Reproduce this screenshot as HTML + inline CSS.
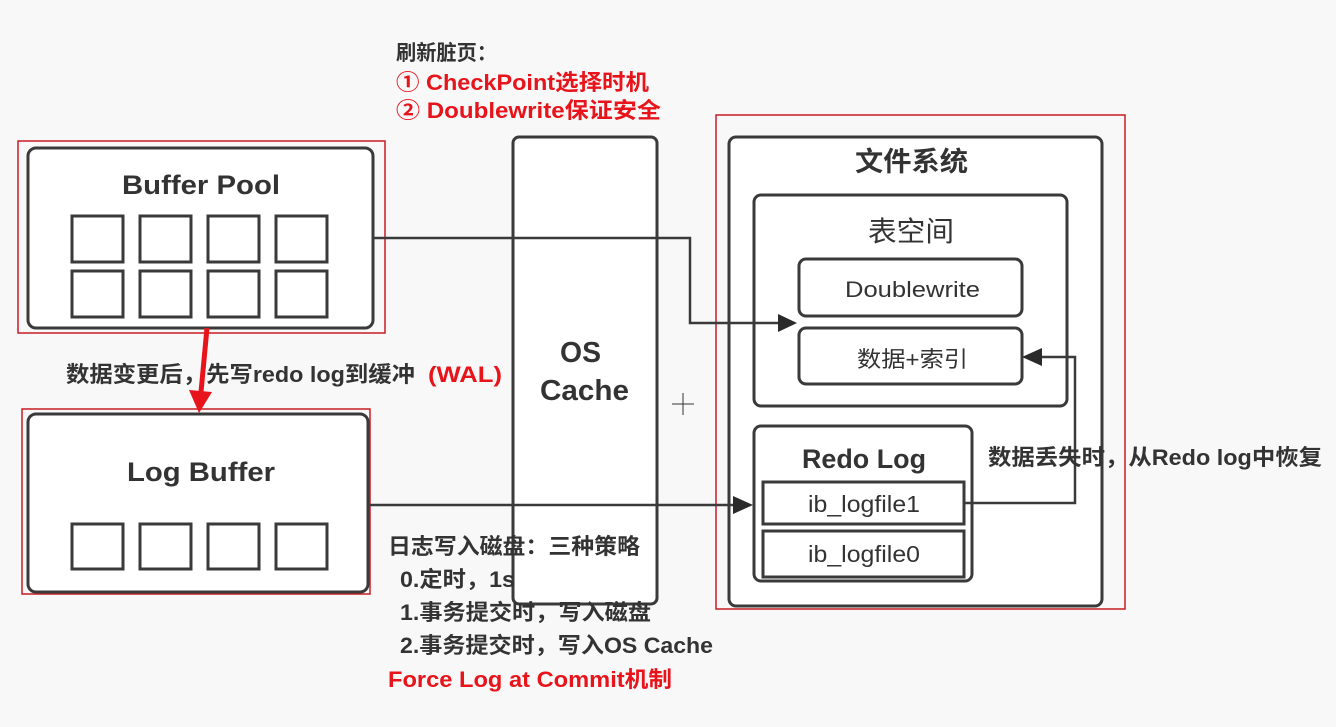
<!DOCTYPE html>
<html><head><meta charset="utf-8"><style>
html,body{margin:0;padding:0;background:#f8f8f8;}
svg{display:block}
text{font-family:"Liberation Sans","Noto Sans CJK SC",sans-serif;font-weight:bold;fill:#333}
.r{fill:#e8141b}
.n{font-weight:normal}
</style></head><body>
<svg width="1336" height="727" viewBox="0 0 1336 727" xmlns="http://www.w3.org/2000/svg">
<rect width="1336" height="727" fill="#f8f8f8"/>
<g fill="none" stroke="#c81c24" stroke-width="1.5">
<rect x="18" y="141" width="367" height="192"/>
<rect x="22" y="409" width="348" height="185"/>
<rect x="716" y="115" width="409" height="494"/>
</g>
<g fill="#fff" stroke="#3a3a3a" stroke-width="3">
<rect x="28" y="148" width="345" height="180" rx="8"/>
<rect x="28" y="414" width="340" height="178" rx="8"/>
<rect x="513" y="137" width="144" height="467" rx="6"/>
<rect x="729" y="137" width="373" height="469" rx="7"/>
<rect x="754" y="195" width="313" height="211" rx="7"/>
<rect x="799" y="259" width="223" height="57" rx="7"/>
<rect x="799" y="328" width="223" height="56" rx="7"/>
<rect x="754" y="426" width="218" height="155" rx="7"/>
<rect x="763" y="482" width="201" height="42"/>
<rect x="763" y="531" width="201" height="46"/>
<rect x="72" y="216" width="51" height="46"/><rect x="140" y="216" width="51" height="46"/><rect x="208" y="216" width="51" height="46"/><rect x="276" y="216" width="51" height="46"/>
<rect x="72" y="271" width="51" height="46"/><rect x="140" y="271" width="51" height="46"/><rect x="208" y="271" width="51" height="46"/><rect x="276" y="271" width="51" height="46"/>
<rect x="72" y="524" width="51" height="45"/><rect x="140" y="524" width="51" height="45"/><rect x="208" y="524" width="51" height="45"/><rect x="276" y="524" width="51" height="45"/>
</g>
<g fill="none" stroke="#3a3a3a" stroke-width="2.5">
<polyline points="373,238 690,238 690,323 780,323"/>
<line x1="370" y1="505" x2="735" y2="505"/>
<polyline points="964,503 1075,503 1075,357 1040,357"/>
</g>
<g fill="#2a2a2a">
<polygon points="797,323 778,314 778,332"/>
<polygon points="753,505 733,496 733,514"/>
<polygon points="1022,357 1042,348 1042,366"/>
</g>
<line x1="207" y1="328" x2="201" y2="392" stroke="#e8141b" stroke-width="5"/>
<polygon points="189,390 212,392 199,413" fill="#e8141b"/>
<g stroke="#333" stroke-width="1"><line x1="672" y1="404" x2="694" y2="404"/><line x1="683" y1="393" x2="683" y2="415"/></g>
<text x="122" y="194" font-size="27" textLength="158" lengthAdjust="spacingAndGlyphs">Buffer Pool</text>
<text x="127" y="481" font-size="27" textLength="148" lengthAdjust="spacingAndGlyphs">Log Buffer</text>
<text x="560" y="362" font-size="29" textLength="41" lengthAdjust="spacingAndGlyphs">OS</text>
<text x="540" y="400" font-size="29" textLength="89" lengthAdjust="spacingAndGlyphs">Cache</text>
<text x="855" y="171" font-size="27" textLength="113" lengthAdjust="spacingAndGlyphs">文件系统</text>
<text x="868" y="241" font-size="28" textLength="86" lengthAdjust="spacingAndGlyphs" class="n">表空间</text>
<text x="845" y="297" font-size="22" textLength="135" lengthAdjust="spacingAndGlyphs" class="n">Doublewrite</text>
<text x="857" y="367" font-size="22" textLength="111" lengthAdjust="spacingAndGlyphs" class="n">数据+索引</text>
<text x="802" y="468" font-size="27" textLength="124" lengthAdjust="spacingAndGlyphs">Redo Log</text>
<text x="808" y="512" font-size="23" textLength="112" lengthAdjust="spacingAndGlyphs" class="n">ib_logfile1</text>
<text x="808" y="562" font-size="23" textLength="112" lengthAdjust="spacingAndGlyphs" class="n">ib_logfile0</text>
<text x="988" y="465" font-size="22" textLength="334" lengthAdjust="spacingAndGlyphs">数据丢失时，从Redo log中恢复</text>
<text x="66" y="382" font-size="22" textLength="349" lengthAdjust="spacingAndGlyphs">数据变更后，先写redo log到缓冲</text>
<text x="428" y="382" font-size="22" textLength="74" lengthAdjust="spacingAndGlyphs" class="r">(WAL)</text>
<text x="396" y="60" font-size="21" textLength="101" lengthAdjust="spacingAndGlyphs">刷新脏页：</text>
<text x="396" y="90" font-size="22" textLength="253" lengthAdjust="spacingAndGlyphs" class="r">① CheckPoint选择时机</text>
<text x="396" y="118" font-size="22" textLength="265" lengthAdjust="spacingAndGlyphs" class="r">② Doublewrite保证安全</text>
<text x="388" y="554" font-size="22" textLength="252" lengthAdjust="spacingAndGlyphs">日志写入磁盘：三种策略</text>
<text x="400" y="587" font-size="22" textLength="115" lengthAdjust="spacingAndGlyphs">0.定时，1s</text>
<text x="400" y="620" font-size="22" textLength="251" lengthAdjust="spacingAndGlyphs">1.事务提交时，写入磁盘</text>
<text x="400" y="653" font-size="22" textLength="313" lengthAdjust="spacingAndGlyphs">2.事务提交时，写入OS Cache</text>
<text x="388" y="687" font-size="22" textLength="284" lengthAdjust="spacingAndGlyphs" class="r">Force Log at Commit机制</text>
</svg>
</body></html>
